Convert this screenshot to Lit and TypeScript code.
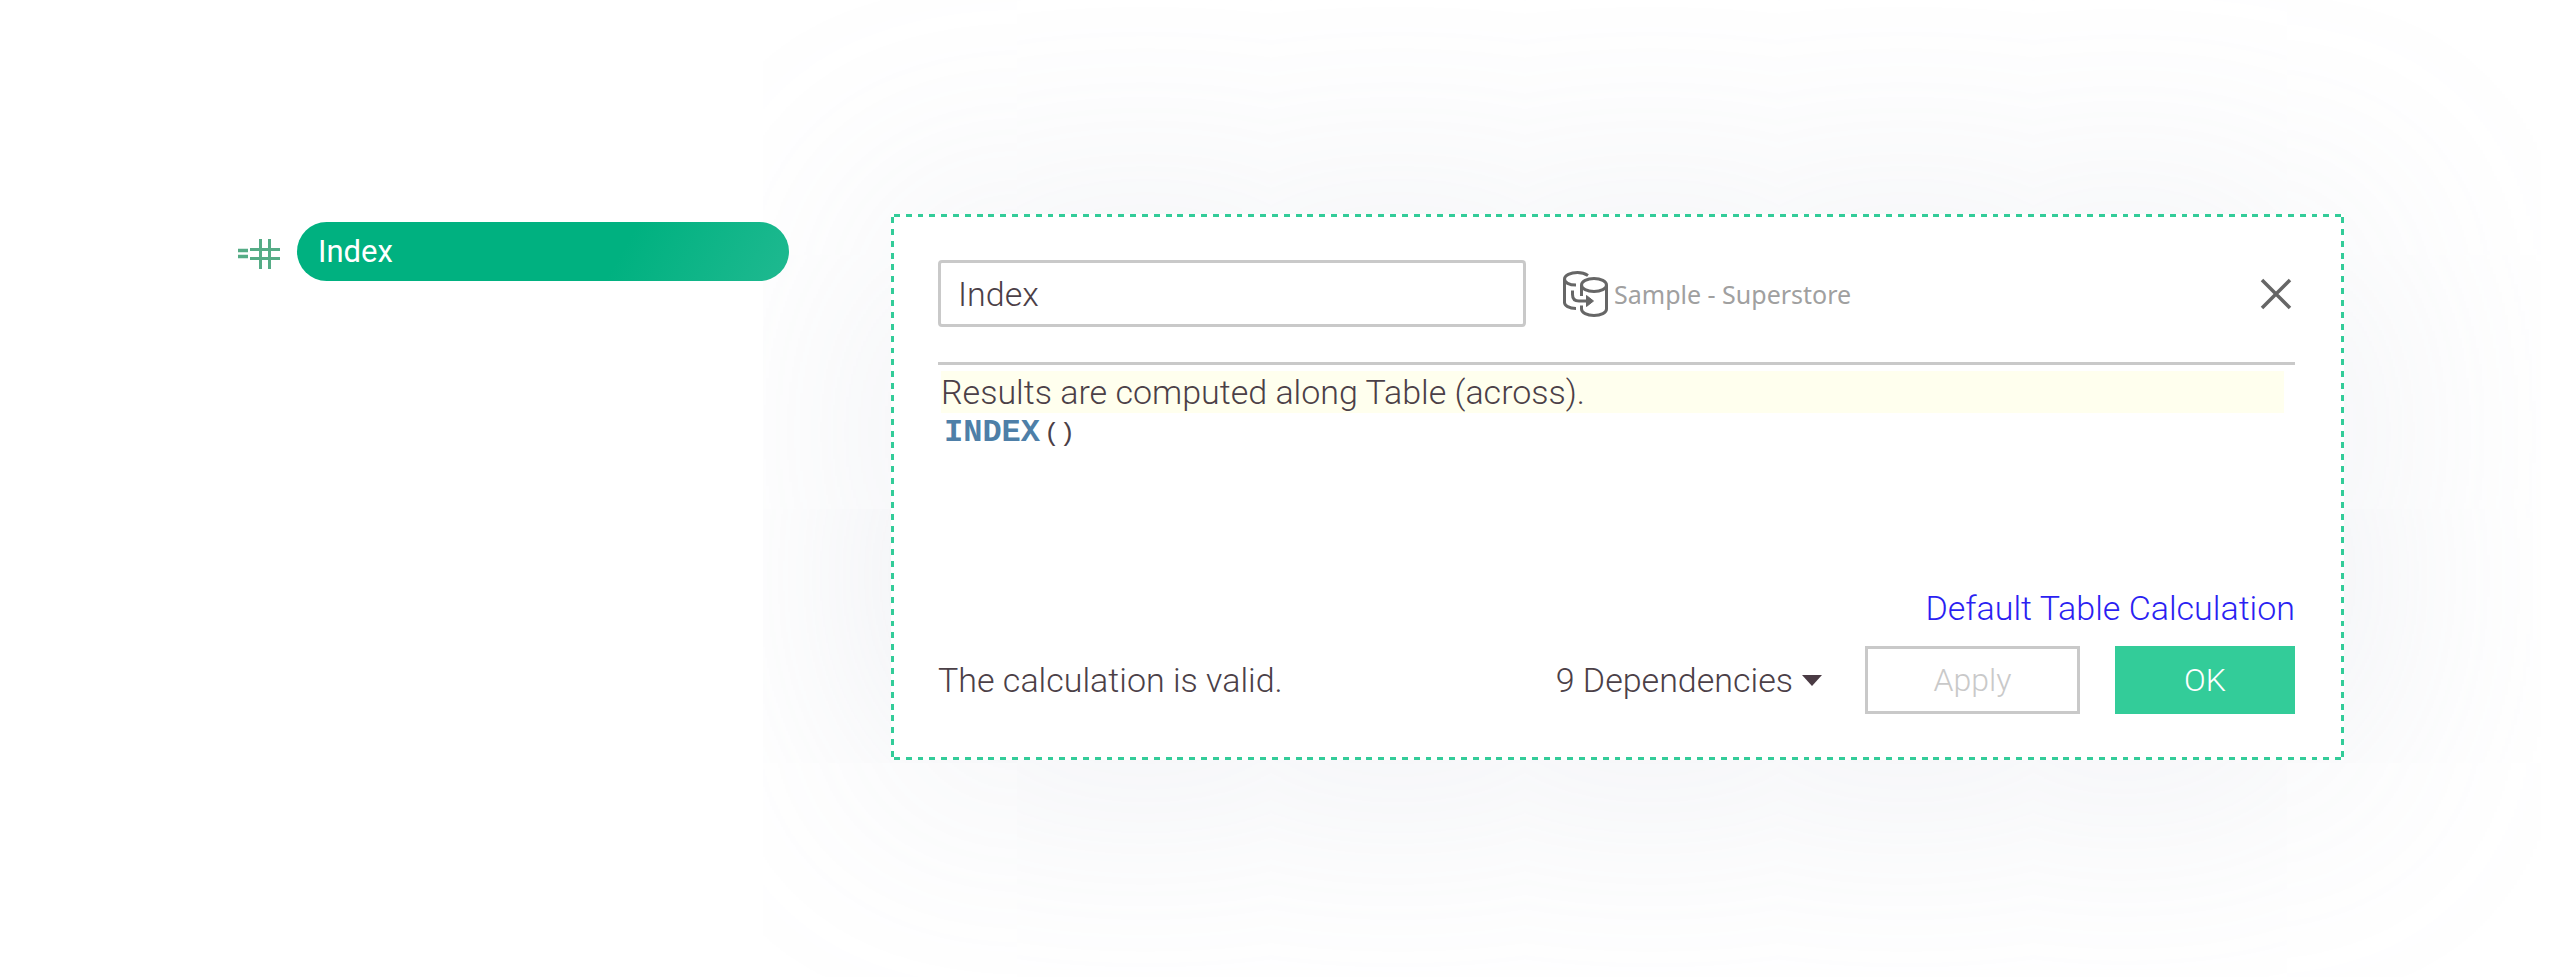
import { LitElement, html, css } from "lit";
import { customElement, property } from "lit/decorators.js";

@customElement("field-pill")
class FieldPill extends LitElement {
  @property() label = "";

  static styles = css`
    :host {
      display: flex;
      align-items: center;
      gap: 17px;
    }
    .icon {
      flex: none;
      width: 42px;
      height: 30px;
      margin-top: 4px;
    }
    .pill {
      flex: 1;
      min-width: 0;
      height: 59px;
      padding: 0 21px;
      border: 0;
      border-radius: 30px;
      background: linear-gradient(120deg, #00b180 65%, #1fb990);
      color: #fff;
      font: 400 31px/40px Roboto, sans-serif;
      text-align: left;
    }
  `;

  render() {
    return html`
      <svg class="icon" viewBox="0 0 42 30" fill="none" stroke="#55ac86" stroke-width="3" aria-hidden="true">
        <path d="M0 11.5H10M0 17.5H10" stroke-width="3.4" />
        <path d="M12 10.5H42M12 19.5H42M22.5 0V30M31.5 0V30" />
      </svg>
      <button class="pill" type="button">${this.label}</button>
    `;
  }
}

@customElement("calculation-editor")
class CalculationEditor extends LitElement {
  @property() name = "";
  @property() source = "";
  @property({ type: Number }) dependencies = 0;

  static styles = css`
    :host {
      --dash-x: calc(100% / 123);
      --dash-y: calc(100% / 46);
      --green: #33cc99;
      display: block;
      position: relative;
      box-sizing: border-box;
      min-width: 0;
      padding: 46px 49px 46px 47px;
      background: #fff;
      box-shadow: 0 12px 280px rgba(150, 160, 182, 0.21);
      color: #4b4047;
      font: 300 34px/40px Roboto, sans-serif;
    }
    .frame {
      position: absolute;
      inset: 0;
      pointer-events: none;
    }
    .frame::before,
    .frame::after {
      content: "";
      position: absolute;
      inset: 0;
    }
    .frame::before {
      --line: repeating-linear-gradient(
        90deg,
        transparent 0 calc(var(--dash-x) / 4),
        var(--green) calc(var(--dash-x) / 4) calc(var(--dash-x) * 3 / 4),
        transparent calc(var(--dash-x) * 3 / 4) var(--dash-x)
      );
      background: var(--line) top / 100% 3px no-repeat, var(--line) bottom / 100% 3px no-repeat;
    }
    .frame::after {
      --line: repeating-linear-gradient(
        180deg,
        transparent 0 calc(var(--dash-y) / 4),
        var(--green) calc(var(--dash-y) / 4) calc(var(--dash-y) * 3 / 4),
        transparent calc(var(--dash-y) * 3 / 4) var(--dash-y)
      );
      background: var(--line) left / 3px 100% no-repeat, var(--line) right / 3px 100% no-repeat;
    }
    button {
      font: inherit;
      color: inherit;
      border: 0;
      padding: 0;
      background: none;
    }
    .head {
      display: flex;
      align-items: center;
      padding-bottom: 35px;
      border-bottom: 3px solid #c9c9c9;
    }
    .name {
      flex: 0 1 588px;
      min-width: 0;
      box-sizing: border-box;
      height: 67px;
      padding: 0 17px;
      border: 3px solid #c9c9c9;
      border-radius: 4px;
      background: #fff;
      color: inherit;
      font: inherit;
      outline: none;
    }
    .source {
      display: flex;
      align-items: center;
      gap: 6px;
      margin-left: 37px;
      color: #a0a0a0;
      font: 400 25px/36px "Noto Sans", sans-serif;
      white-space: nowrap;
    }
    .source svg {
      flex: none;
      width: 45px;
      height: 46px;
    }
    .close {
      margin-left: auto;
      width: 38px;
      height: 38px;
    }
    .close svg {
      display: block;
    }
    .editor {
      min-height: 217px;
      padding: 6px 11px 0 3px;
    }
    .note {
      margin: 0;
      background: #ffffee;
      line-height: 42px;
    }
    .formula {
      margin: 0;
      padding: 0 3px;
      font: 400 26px/40px "Liberation Mono", monospace;
    }
    .formula code {
      font: inherit;
    }
    .fn {
      margin-right: 4px;
      color: #4e7fa8;
      font-size: 32px;
      font-weight: 700;
    }
    .link {
      display: block;
      width: fit-content;
      margin: 0 0 18px auto;
      color: #2b1ff2;
      text-decoration: none;
    }
    .foot {
      display: flex;
      align-items: center;
    }
    .status {
      margin-right: auto;
    }
    .deps {
      display: flex;
      align-items: center;
      gap: 9px;
      margin-right: 43px;
    }
    .caret {
      width: 20px;
      height: 11px;
    }
    .apply,
    .ok {
      height: 68px;
      font-size: 32px;
    }
    .apply {
      width: 215px;
      margin-right: 35px;
      border: 3px solid #c9c9c9;
      color: #c9c9c9;
    }
    .ok {
      width: 180px;
      background: var(--green);
      color: #fff;
    }
  `;

  render() {
    return html`
      <div class="head">
        <input class="name" type="text" aria-label="Calculation name" .value=${this.name} />
        <div class="source">
          <svg viewBox="0 0 45 46" fill="none" stroke="#666" stroke-width="3" aria-hidden="true">
            <path d="M25 4.500C22 2.500 18.500 1.500 14.500 1.500C7.500 1.500 1.500 4.500 1.500 8V31.500C1.500 34.500 6 37.500 13 37.500M1.500 8C1.500 11.500 6 14 13 14" />
            <ellipse cx="31" cy="14" rx="12.500" ry="6.500" />
            <path d="M18.500 14V25M43.500 14V38C43.500 41.500 38 44.500 31 44.500C24 44.500 18.500 41.500 18.500 38V34.500" />
            <path d="M9.500 19.500V23.500Q9.500 30 16 30H25" />
            <path d="M23.500 24.500L30.500 30L23.500 35.500Z" fill="#666" stroke-width="1" />
          </svg>
          <span>${this.source}</span>
        </div>
        <button class="close" type="button" aria-label="Close">
          <svg width="38" height="38" viewBox="0 0 38 38" stroke="#666" stroke-width="3.500">
            <path d="M5 5L33 33M33 5L5 33" />
          </svg>
        </button>
      </div>
      <div class="editor">
        <p class="note">Results are computed along Table (across).</p>
        <pre class="formula"><code><span class="fn">INDEX</span>()</code></pre>
      </div>
      <a class="link" href="#">Default Table Calculation</a>
      <div class="foot">
        <span class="status">The calculation is valid.</span>
        <button class="deps" type="button">
          ${this.dependencies} Dependencies
          <svg class="caret" viewBox="0 0 20 11" aria-hidden="true"><path d="M0 0H20L10 11Z" fill="#4a3b44" /></svg>
        </button>
        <button class="apply" type="button" disabled>Apply</button>
        <button class="ok" type="button">OK</button>
      </div>
      <div class="frame"></div>
    `;
  }
}

@customElement("app-root")
class AppRoot extends LitElement {
  static styles = css`
    :host {
      display: block;
      box-sizing: border-box;
      min-height: 100vh;
      padding: 214px 216px 100px 238px;
      overflow: hidden;
      background: #fff;
    }
    .layout {
      display: grid;
      grid-template-columns: minmax(0, 551fr) minmax(0, 1453fr);
      gap: 102px;
      align-items: start;
    }
    .pill {
      margin-top: 8px;
      position: relative;
      z-index: 1;
    }
  `;

  render() {
    return html`
      <main class="layout">
        <field-pill class="pill" label="Index"></field-pill>
        <calculation-editor name="Index" source="Sample - Superstore" dependencies="9"></calculation-editor>
      </main>
    `;
  }
}
